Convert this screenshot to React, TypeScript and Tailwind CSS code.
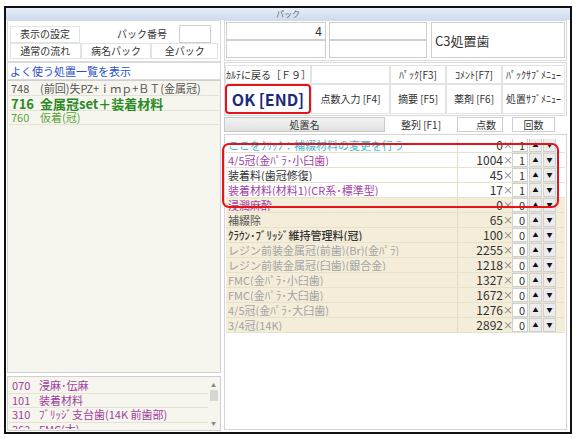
const rows = [
  { name: "ここをｸﾘｯｸ：補綴材料の変更を行う", color: "text-[#3db6cf]", pts: 0, n: 1, cream: false },
  { name: "4/5冠(金ﾊﾟﾗ･小臼歯)", color: "text-[#a23fa8]", pts: 1004, n: 1, cream: false },
  { name: "装着料(歯冠修復)", color: "text-[#333]", pts: 45, n: 1, cream: false },
  { name: "装着材料(材料1)(CR系･標準型)", color: "text-[#a23fa8]", pts: 17, n: 1, cream: false },
  { name: "浸潤麻酔", color: "text-[#a23fa8]", pts: 0, n: 0, cream: true },
  { name: "補綴除", color: "text-[#555]", pts: 65, n: 0, cream: true },
  { name: "ｸﾗｳﾝ･ﾌﾞﾘｯｼﾞ維持管理料(冠)", color: "text-[#333] font-medium", pts: 100, n: 0, cream: true },
  { name: "レジン前装金属冠(前歯)(Br)(金ﾊﾟﾗ)", color: "text-[#a3a3a3]", pts: 2255, n: 0, cream: true },
  { name: "レジン前装金属冠(臼歯)(銀合金)", color: "text-[#a3a3a3]", pts: 1218, n: 0, cream: true },
  { name: "FMC(金ﾊﾟﾗ･小臼歯)", color: "text-[#a3a3a3]", pts: 1327, n: 0, cream: true },
  { name: "FMC(金ﾊﾟﾗ･大臼歯)", color: "text-[#a3a3a3]", pts: 1672, n: 0, cream: true },
  { name: "4/5冠(金ﾊﾟﾗ･大臼歯)", color: "text-[#a3a3a3]", pts: 1276, n: 0, cream: true },
  { name: "3/4冠(14K)", color: "text-[#a3a3a3]", pts: 2892, n: 0, cream: true },
];

const lower = [
  { code: "070", name: "浸麻･伝麻" },
  { code: "101", name: "装着材料" },
  { code: "310", name: "ﾌﾞﾘｯｼﾞ支台歯(14K 前歯部)" },
  { code: "362", name: "FMC(大)" },
];

const cell = "flex items-center justify-center border border-[#e3e3e3] bg-white text-[10px] text-[#333] leading-none";

export default function App() {
  return (
    <div className="h-[439px] w-[580px] overflow-hidden bg-white pl-[4px] pt-[6px] font-['Noto_Sans_CJK_JP',sans-serif]">
      <div className="flex h-[428px] w-[568px] flex-col border-2 border-[#111] bg-white">
        {/* title bar */}
        <div className="flex h-[12px] items-center justify-center bg-gradient-to-b from-[#e6eef9] to-[#cddbee] text-[8px] leading-none text-[#666]">
          パック
        </div>

        <div className="flex flex-1 gap-[3px] pl-[1px] pr-[3px]">
          {/* left column */}
          <div className="flex w-[214px] flex-col">
            <div className="flex h-[42px] flex-col border border-[#dadada] bg-white px-[2px] pt-[4px]">
              <div className="flex h-[18px] items-center">
                <div className={`${cell} h-[17px] w-[70px]`}>表示の設定</div>
                <div className="w-[99px] pr-[12px] text-right text-[10px] leading-none text-[#333]">パック番号</div>
                <div className="h-[18px] w-[32px] border border-[#cfcfcf] bg-white" />
              </div>
              <div className="flex h-[16px]">
                <div className={`${cell} w-[71px]`}>通常の流れ</div>
                <div className={`${cell} w-[71px]`}>病名パック</div>
                <div className={`${cell} w-[67px]`}>全パック</div>
              </div>
            </div>
            <div className="flex h-[18px] items-center border border-[#dadada] bg-white pl-[2px] text-[11px] leading-none text-[#2b50c8]">
              よく使う処置一覧を表示
            </div>
            <div className="h-[293px] border border-[#cfcfcf] bg-[#f7f6ee] p-[1px]">
              <div className="flex h-[14px] items-center border-b border-[#e4e2d6] text-[11px] leading-none text-[#555]">
                <span className="w-[31px] pl-[2px]">748</span>
                <span>(前回)失PZ+ｉｍｐ+ＢＴ(金属冠)</span>
              </div>
              <div className="flex h-[15px] items-center border-b border-[#e4e2d6] text-[13px] font-bold leading-none text-[#2b8a25]">
                <span className="w-[31px] pl-[2px]">716</span>
                <span>金属冠set＋装着材料</span>
              </div>
              <div className="flex h-[14px] items-center border-b border-[#e4e2d6] text-[11px] leading-none text-[#5aa33c]">
                <span className="w-[31px] pl-[2px]">760</span>
                <span>仮着(冠)</span>
              </div>
            </div>
            <div className="mt-[3px] flex h-[55px] border border-[#cfcfcf] bg-[#f7f6ee] p-[1px]">
              <div className="flex-1 overflow-hidden pt-[1px]">
                {lower.map((r) => (
                  <div key={r.code} className="flex h-[14.5px] shrink-0 items-center border-b border-[#e4e2d6] text-[11px] leading-none text-[#9c3fa0]">
                    <span className="w-[30px] pl-[3px]">{r.code}</span>
                    <span>{r.name}</span>
                  </div>
                ))}
              </div>
              <div className="flex w-[11px] flex-col items-center text-[5px] leading-none text-[#888]">
                <span className="mt-[4px]">▲</span>
                <div className="mt-[3px] h-[11px] w-[8px] bg-[#d6d6d6]" />
                <span className="mb-[4px] mt-auto">▼</span>
              </div>
            </div>
          </div>

          {/* right column */}
          <div className="flex flex-1 flex-col">
            <div className="flex h-[41px] border border-[#dadada] bg-white p-[1px]">
              <div className="flex w-[100px] flex-col">
                <div className="flex h-[18px] items-center justify-end border border-[#cfcfcf] pr-[3px] text-[12px] leading-none text-[#333]">4</div>
                <div className="h-[18px] border border-[#cfcfcf]" />
              </div>
              <div className="ml-[3px] flex w-[98px] flex-col">
                <div className="h-[18px] border border-[#cfcfcf]" />
                <div className="h-[18px] border border-[#cfcfcf]" />
              </div>
              <div className="ml-[4px] flex h-[36px] flex-1 items-center border border-[#cfcfcf] pl-[3px] text-[13px] leading-none text-[#333]">
                C3処置歯
              </div>
            </div>

            <div className="mt-[1px] flex h-[54px] flex-col border border-[#dadada] bg-white pt-[2px]">
              <div className="flex h-[19px]">
                <div className={`${cell} w-[86px]`}>ｶﾙﾃに戻る［Ｆ９］</div>
                <div className={`${cell} w-[79px]`} />
                <div className={`${cell} w-[56px]`}>ﾊﾟｯｸ[F3]</div>
                <div className={`${cell} w-[56px]`}>ｺﾒﾝﾄ[F7]</div>
                <div className={`${cell} w-[63px]`}>ﾊﾟｯｸｻﾌﾞﾒﾆｭｰ</div>
              </div>
              <div className="flex h-[30px]">
                <div className="flex w-[86px] items-center justify-center rounded-[4px] border-[2.5px] border-[#e5141b] bg-white text-[16px] font-bold leading-none text-[#1c2a7c]">
                  OK [END]
                </div>
                <div className={`${cell} w-[79px]`}>点数入力 [F4]</div>
                <div className={`${cell} w-[56px]`}>摘要 [F5]</div>
                <div className={`${cell} w-[56px]`}>薬剤 [F6]</div>
                <div className={`${cell} w-[63px]`}>処置ｻﾌﾞﾒﾆｭｰ</div>
              </div>
            </div>

            <div className="mt-[1px] flex h-[15px] items-center">
              <div className="flex h-[15px] w-[161px] items-center justify-center border border-[#c9c9c9] bg-gradient-to-b from-[#f3f3f3] to-[#e1e1e1] text-[10px] leading-none text-[#333]">
                処置名
              </div>
              <div className="w-[72px] text-center text-[10px] leading-none text-[#333]">整列 [F1]</div>
              <div className="flex h-[15px] w-[46px] items-center justify-end border border-[#cfcfcf] bg-white pr-[6px] text-[10px] leading-none text-[#333]">
                点数
              </div>
              <div className="ml-[9px] flex h-[15px] w-[43px] items-center justify-center border border-[#cfcfcf] bg-white text-[10px] leading-none text-[#333]">
                回数
              </div>
            </div>

            <div className="relative mb-[2px] mt-[2px] flex-1 border border-[#d4d4d4] bg-white px-[1px] pt-[4px]">
              <div className="overflow-hidden">
                <div className="-mt-[1px]">
                  {rows.map((r, i) => (
                    <div key={i} className={`flex h-[15px] items-center border-b border-[#e8e1cc] ${r.cream ? "bg-[#f4edd9]" : "bg-white"}`}>
                      <div className={`w-[231px] truncate pl-[2px] text-[11px] leading-none ${r.color}`}>{r.name}</div>
                      <div className="flex h-full w-[46px] items-center justify-end border-l border-[#e3dcc6] text-[12px] leading-none text-[#333]">{r.pts}</div>
                      <div className="w-[9px] text-center text-[10px] leading-none text-[#777]">×</div>
                      <div className="flex h-full w-[16px] items-center justify-end border border-[#cfcfcf] bg-white pr-[2px] text-[11px] leading-none text-[#333]">{r.n}</div>
                      <div className="ml-[1px] flex h-full w-[13px] items-center justify-center border border-[#d0d0d0] bg-[#ececec] text-[6px] leading-none text-[#111]">▲</div>
                      <div className="ml-[1px] flex h-full w-[13px] items-center justify-center border border-[#d0d0d0] bg-[#ececec] text-[6px] leading-none text-[#111]">▼</div>
                    </div>
                  ))}
                </div>
              </div>
              {/* highlight annotation */}
              <div className="absolute left-[-3px] top-[8px] h-[65px] w-[337px] rounded-[7px] border-[2.5px] border-[#e5141b]" />
            </div>
          </div>
        </div>
      </div>
    </div>
  );
}
